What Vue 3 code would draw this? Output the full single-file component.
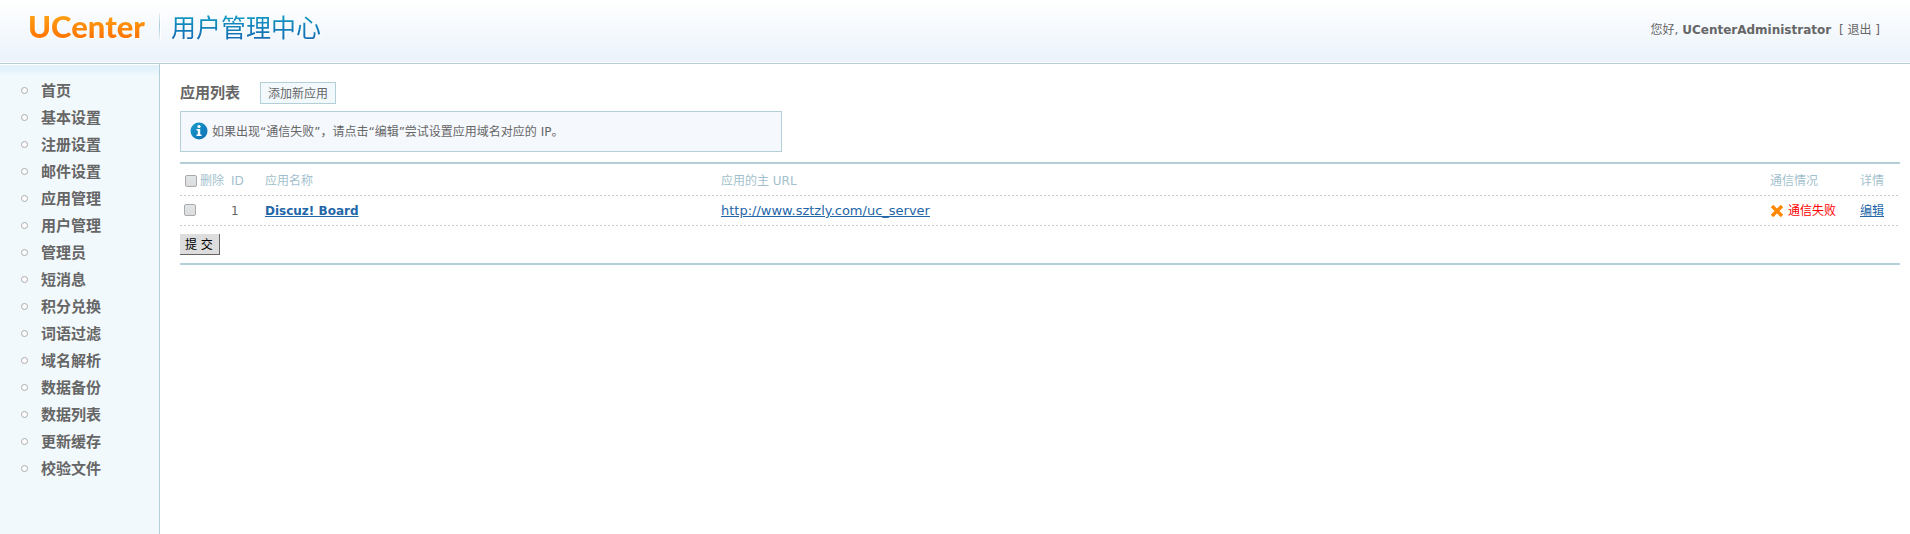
<script setup>
import { ref } from 'vue'

const menu = [
  '首页', '基本设置', '注册设置', '邮件设置', '应用管理',
  '用户管理', '管理员', '短消息', '积分兑换', '词语过滤',
  '域名解析', '数据备份', '数据列表', '更新缓存', '校验文件',
]

const apps = ref([
  { id: 1, name: 'Discuz! Board', url: 'http://www.sztzly.com/uc_server', status: '通信失败', checked: false },
])
const all = ref(false)

function toggleAll() {
  apps.value.forEach((app) => { app.checked = all.value })
}
</script>

<template>
  <div class="page">
    <header class="header">
      <div class="brand">
        <span class="logo">UCenter</span>
        <span class="divider"></span>
        <span class="subtitle">用户管理中心</span>
      </div>
      <p class="user">您好, <strong>UCenterAdministrator</strong> <span class="logout">[ <a href="#">退出</a> ]</span></p>
    </header>

    <nav class="sidebar">
      <ul>
        <li v-for="item in menu" :key="item"><a href="#">{{ item }}</a></li>
      </ul>
    </nav>

    <main class="main">
      <div class="heading">
        <h1>应用列表</h1>
        <button type="button" class="add">添加新应用</button>
      </div>

      <div class="notice">
        <svg width="18" height="18" viewBox="0 0 18 18" aria-hidden="true">
          <defs>
            <linearGradient id="info" x1="0" y1="0" x2="1" y2="1">
              <stop offset="0" stop-color="#1b9ccb" />
              <stop offset="1" stop-color="#0f6fb4" />
            </linearGradient>
          </defs>
          <circle cx="9" cy="9" r="8.5" fill="url(#info)" />
          <circle cx="9" cy="4.5" r="1.6" fill="#fff" />
          <path d="M6.5 7H10.2V12.5H11.5V14H6.5V12.5H7.8V8.4H6.5Z" fill="#fff" />
        </svg>
        <p>如果出现“通信失败”，请点击“编辑”尝试设置应用域名对应的 IP。</p>
      </div>

      <form class="list" @submit.prevent>
        <table>
          <colgroup>
            <col class="c-check" /><col class="c-id" /><col class="c-name" />
            <col /><col class="c-status" /><col class="c-detail" />
          </colgroup>
          <thead>
            <tr>
              <th><label class="check"><input v-model="all" type="checkbox" @change="toggleAll" />删除</label></th>
              <th>ID</th>
              <th>应用名称</th>
              <th>应用的主 URL</th>
              <th>通信情况</th>
              <th>详情</th>
            </tr>
          </thead>
          <tbody>
            <tr v-for="app in apps" :key="app.id">
              <td><label class="check"><input v-model="app.checked" type="checkbox" :aria-label="app.name" /></label></td>
              <td>{{ app.id }}</td>
              <td><a href="#"><strong>{{ app.name }}</strong></a></td>
              <td><a class="url" :href="app.url">{{ app.url }}</a></td>
              <td>
                <span class="failed">
                  <svg width="14" height="12" viewBox="0 0 14 12" aria-hidden="true">
                    <path d="M3.2 2.2L10.8 9.8M10.8 2.2L3.2 9.8" stroke="#ff8800" stroke-width="3.4" stroke-linecap="square" />
                  </svg>
                  {{ app.status }}
                </span>
              </td>
              <td><a href="#">编辑</a></td>
            </tr>
          </tbody>
        </table>
        <div class="actions"><button type="submit">提 交</button></div>
      </form>
    </main>
  </div>
</template>

<style>
body {
  margin: 0;
}
</style>

<style scoped>
.page {
  display: grid;
  grid-template: auto 1fr / 160px 1fr;
  min-height: 100vh;
  background: #fff;
  color: #666;
  font: 12px/18px "DejaVu Sans", "Noto Sans CJK SC", sans-serif;
}
p, h1, ul {
  margin: 0;
  padding: 0;
}
button, input {
  font: inherit;
}
.header {
  grid-column: 1 / -1;
  display: flex;
  align-items: flex-start;
  justify-content: space-between;
  box-sizing: border-box;
  height: 64px;
  padding: 5px 30px 0 28px;
  border-bottom: 1px solid #b5cfd9;
  background: linear-gradient(#fff, #ebf3fb 60px, #ebf3fb 62px, #fff 62px);
}
.brand {
  display: flex;
  align-items: center;
  filter: drop-shadow(1px 1px 0 #fff);
}
.logo, .subtitle {
  background-clip: text;
  -webkit-background-clip: text;
  color: transparent;
  white-space: nowrap;
}
.logo {
  width: 131px;
  background-image: linear-gradient(#ffa014 25%, #ff7300 80%);
  font: 900 31px/42px Lato, sans-serif;
}
.divider {
  width: 1px;
  height: 26px;
  margin-right: 11px;
  background: linear-gradient(#e4eef4, #a9c9d8, #e4eef4);
}
.subtitle {
  background-image: linear-gradient(#109cc2 20%, #146cb4 80%);
  font: 25px/42px "Noto Sans CJK SC", sans-serif;
}
.user {
  padding-top: 16px;
}
.user a {
  color: inherit;
  text-decoration: none;
}
.logout {
  margin-left: 4px;
}
.sidebar {
  padding-top: 13px;
  border-right: 1px solid #b5cfd9;
  background: linear-gradient(#fff 1px, #e3f1fb 1px, #e3f1fb 5px, #f2f9fd 12px);
}
.sidebar li {
  display: flex;
  align-items: center;
  height: 27px;
  padding-left: 21px;
}
.sidebar li::before {
  content: "";
  box-sizing: border-box;
  width: 7px;
  height: 7px;
  margin-right: 13px;
  border: 1px solid #aaa;
  border-radius: 50%;
  background: #fff;
}
.sidebar a {
  color: #666;
  font-size: 15px;
  font-weight: bold;
  text-decoration: none;
}
.main {
  padding: 18px 10px 18px 20px;
}
.heading {
  display: flex;
  align-items: center;
  gap: 20px;
  margin-bottom: 7px;
}
.heading h1 {
  font-size: 15px;
  line-height: 22px;
}
.add {
  height: 22px;
  padding: 2px 7px 0;
  border: 1px solid #b5cfd9;
  background: #f2f9fd;
  color: #666;
}
.notice {
  display: flex;
  align-items: center;
  gap: 4px;
  box-sizing: border-box;
  width: 35%;
  height: 41px;
  padding: 0 9px 2px;
  border: 1px solid #b5cfd9;
  background: #f5f8fd;
}
.notice p {
  padding-top: 2px;
}
.list {
  margin-top: 10px;
  border: solid #b5cfd9;
  border-width: 2px 0;
}
table {
  width: 100%;
  border-spacing: 0;
  table-layout: fixed;
}
.c-check { width: 46px; }
.c-id { width: 34px; }
.c-name { width: 456px; }
.c-status { width: 90px; }
.c-detail { width: 45px; }
tr {
  background: repeating-linear-gradient(90deg, #ccc 0 2px, transparent 2px 4px) bottom / 100% 1px no-repeat;
}
th, td {
  box-sizing: border-box;
  height: 30px;
  padding: 0 0 0 5px;
  text-align: left;
  white-space: nowrap;
}
th {
  height: 32px;
  padding-top: 2px;
  color: #a3bfcd;
  font-weight: normal;
}
td:first-child {
  padding: 0 0 2px 4px;
}
td a {
  color: #2366a8;
}
.url {
  font-size: 13px;
}
.check {
  display: flex;
  align-items: center;
  gap: 3px;
}
.check input {
  appearance: none;
  box-sizing: border-box;
  width: 12px;
  height: 12px;
  margin: 0;
  border: 1px solid #aaa;
  border-radius: 2px;
  background: linear-gradient(#e0e6e8, #dcdcdc);
}
.check input:checked {
  background: #2366a8;
}
.failed {
  display: flex;
  align-items: center;
  gap: 4px;
  color: #f00;
}
.actions {
  padding: 8px 0;
}
.actions button {
  display: block;
  height: 21px;
  padding: 2px 6px 0 5px;
  border: solid #666;
  border-width: 0 1px 1px 0;
  background: #ddd;
  color: #000;
}
</style>
